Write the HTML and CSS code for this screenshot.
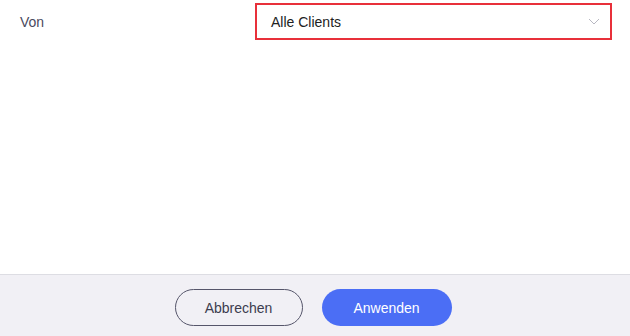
FILE: index.html
```html
<!DOCTYPE html>
<html lang="de">
<head>
  <meta charset="UTF-8" />
  <meta name="viewport" content="width=device-width, initial-scale=1.0" />
  <title>Filter</title>
  <link rel="stylesheet" href="styles.css">
</head>
<body>
  <div class="dialog">
    <div class="dialog-body">
      <div class="field-row">
        <label class="field-label">Von</label>
        <div class="select-box">
          <span class="select-value">Alle Clients</span>
          <svg class="chevron" width="12" height="7" viewBox="0 0 12 7">
            <path d="M1 1 L6 6 L11 1" fill="none" stroke="#b8b8c2" stroke-width="1"/>
          </svg>
        </div>
      </div>
    </div>
    <div class="dialog-footer">
      <button class="btn btn-cancel">Abbrechen</button>
      <button class="btn btn-apply">Anwenden</button>
    </div>
  </div>
</body>
</html>
```

FILE: styles.css
```css
body {
  margin: 0;
  font-family: 'Liberation Sans', Arial, sans-serif;
  background: #fff;
}
.dialog {
  width: 630px;
  height: 336px;
  display: flex;
  flex-direction: column;
}
.dialog-body {
  flex: 1;
  padding: 3px 18px 0 20px;
}
.field-row {
  display: flex;
  align-items: center;
  justify-content: space-between;
}
.field-label {
  font-size: 14px;
  color: #4a4a60;
}
.select-box {
  box-sizing: border-box;
  width: 357px;
  height: 37px;
  border: 2px solid #e8303a;
  display: flex;
  align-items: center;
  justify-content: space-between;
  padding: 0 10px 0 14px;
}
.select-value {
  font-size: 14px;
  color: #222;
}
.chevron {
  display: block;
}
.dialog-footer {
  height: 62px;
  border-top: 1px solid #dddde3;
  background: #f1f0f5;
  display: flex;
  justify-content: center;
  align-items: flex-start;
  gap: 19px;
  padding: 14px 4px 0 0;
  box-sizing: border-box;
}
.btn {
  height: 37px;
  border-radius: 19px;
  font-family: 'Liberation Sans', Arial, sans-serif;
  font-size: 14px;
  cursor: pointer;
}
.btn-cancel {
  width: 128px;
  background: transparent;
  border: 1px solid #55556a;
  color: #3c3c4e;
}
.btn-apply {
  width: 130px;
  background: #4b6ef5;
  border: none;
  color: #fff;
}
```
